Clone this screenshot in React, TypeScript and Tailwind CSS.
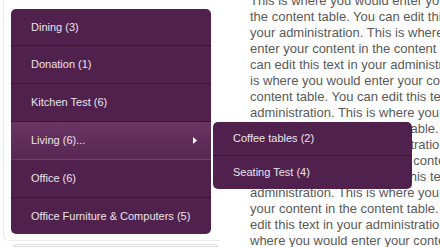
const items = [
  { label: "Dining (3)", h: "h-[37px]" },
  { label: "Donation (1)", h: "h-[38px]" },
  { label: "Kitchen Test (6)", h: "h-[38px]" },
  { label: "Living (6)...", h: "h-[38px]", active: true },
  { label: "Office (6)", h: "h-[38px]" },
  { label: "Office Furniture & Computers (5)", h: "h-[36px]", last: true },
]

const lines = [
  "This is where you would enter your content in",
  "the content table. You can edit this text in",
  "your administration. This is where you would",
  "enter your content in the content table. You",
  "can edit this text in your administration. This",
  "is where you would enter your content in the",
  "content table. You can edit this text in your",
  "administration. This is where you would enter",
  "your content in the content table. You can",
  "edit this text in your administration. This is",
  "where you would enter your content in the",
  "content table. You can edit this text in your",
  "administration. This is where you would enter",
  "your content in the content table. You can",
  "edit this text in your administration. This is",
  "where you would enter your content in the",
]

function SubMenu() {
  return (
    <div className="absolute left-[202px] top-0 z-10 w-[199px] rounded-[5px] bg-[#50214d] text-[11px] text-[#ebe3ea]">
      <div className="h-[34px] flex items-center pl-5 border-b border-dotted border-[#2b0c29]">Coffee tables (2)</div>
      <div className="h-[33px] flex items-center pl-5">Seating Test (4)</div>
    </div>
  )
}

export default function App() {
  return (
    <div className="w-[440px] h-[247px] overflow-hidden bg-white flex" style={{ fontFamily: '"Liberation Sans", Arial, sans-serif' }}>
        <div className="ml-[3px] w-[217px] shrink-0 flex flex-col">
            <div className="border-l border-b border-[#ebebeb] rounded-bl-[6px] pl-[7px] pt-[9px] pb-[6px]">
                <ul className="w-[200px] rounded-[5px] bg-[#50214d] text-[11px] text-[#ebe3ea]">
                    {items.map((item) => (
                        <li
                            key={item.label}
                            className={
                                "relative flex items-center justify-between pl-5 pr-[14px] " + item.h + " " +
                                (item.active
                                    ? "bg-gradient-to-b from-[#693463] to-[#582753] border-b border-solid border-[#6f406b]"
                                    : item.last
                                        ? ""
                                        : "border-b border-dotted border-[#2b0c29]")
                            }
                        >
                            <span>{item.label}</span>
                            {item.active && (
                                <svg width="4" height="7" viewBox="0 0 4 7">
                                    <path d="M0 0 L4 3.5 L0 7 Z" fill="#ffffff" />
                                </svg>
                            )}
                            {item.active && <SubMenu />}
                        </li>
                    ))}
                </ul>
            </div>
            <div className="mt-[3px] ml-[10px] w-[205px] h-[20px] rounded-t-[6px] border border-[#dedede]" />
        </div>
        <div className="ml-[30px] -mt-[7px] text-[13px] leading-4 text-[#595959] whitespace-nowrap">
            {lines.map((l, i) => (
                <div key={i}>{l}</div>
            ))}
        </div>
    </div>
  )
}
